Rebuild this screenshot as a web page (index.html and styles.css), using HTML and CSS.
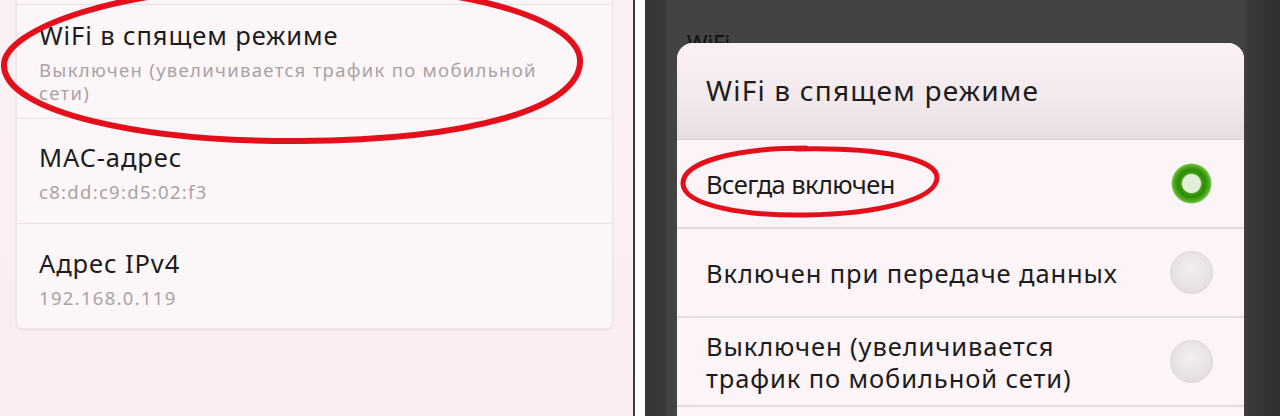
FILE: index.html
```html
<!DOCTYPE html>
<html lang="ru">
<head>
<meta charset="utf-8">
<title>WiFi в спящем режиме</title>
<link rel="stylesheet" href="styles.css">
</head>
<body>
<div class="screen">
  <section class="left">
    <div class="card">
      <div class="stub"></div>
      <div class="row row-first">
        <div class="title">WiFi в спящем режиме</div>
        <div class="sub">Выключен (увеличивается трафик по мобильной<br>сети)</div>
      </div>
      <div class="row row-mac">
        <div class="title">MAC-адрес</div>
        <div class="sub">c8:dd:c9:d5:02:f3</div>
      </div>
      <div class="row row-ip">
        <div class="title">Адрес IPv4</div>
        <div class="sub">192.168.0.119</div>
      </div>
    </div>
    <svg class="mark mark-left" width="600" height="160" viewBox="0 0 600 160">
      <path d="M300 -14 C 120 -16, 2 30, 4 66 C 6 112, 140 142, 300 141 C 470 140, 582 108, 580 60 C 578 22, 480 -12, 330 -14" fill="none" stroke="#e3101c" stroke-width="6" stroke-linecap="round"/>
    </svg>
  </section>
  <div class="split"></div>
  <section class="right">
    <div class="behind">WiFi</div>
    <div class="dialog">
      <div class="dlg-title">WiFi в спящем режиме</div>
      <div class="option">
        <span class="opt-text opt-tight">Всегда включен</span>
        <span class="radio on"></span>
      </div>
      <div class="option">
        <span class="opt-text">Включен при передаче данных</span>
        <span class="radio"></span>
      </div>
      <div class="option">
        <span class="opt-text">Выключен (увеличивается<br>трафик по мобильной сети)</span>
        <span class="radio"></span>
      </div>
      <div class="option option-rest"></div>
    </div>
    <svg class="mark mark-right" width="270" height="80" viewBox="0 0 270 80">
      <path d="M130 4 C 60 4, 6 18, 7 40 C 8 62, 70 72, 130 71 C 200 70, 260 56, 261 34 C 262 14, 200 3, 120 5" fill="none" stroke="#e3101c" stroke-width="5" stroke-linecap="round"/>
    </svg>
  </section>
</div>
</body>
</html>
```
FILE: styles.css
```css
* { box-sizing: border-box; }
html, body { margin: 0; padding: 0; }
body {
  width: 1280px;
  height: 416px;
  overflow: hidden;
  font-family: "Noto Sans", "Open Sans", sans-serif;
  background: #fbeff2;
}
.screen {
  display: flex;
  width: 1280px;
  height: 416px;
}
.left {
  position: relative;
  width: 633px;
  height: 416px;
  padding: 0 20px 0 16px;
  background: linear-gradient(180deg, #fbf1f4 0%, #fbedf0 100%);
  overflow: hidden;
}
.card {
  margin-top: -16px;
  background: #fdf6f8;
  border: 1px solid #efe3e6;
  border-radius: 6px;
  box-shadow: 0 1px 2px rgba(120, 90, 100, 0.12);
}
.stub {
  height: 20px;
  border-bottom: 1px solid #ebdfe2;
}
.row {
  padding: 23px 22px 20px;
  border-bottom: 1px solid #ebdfe2;
}
.row:last-child { border-bottom: 0; }
.row-first { padding-top: 15px; padding-bottom: 14px; }
.row-ip { padding-top: 24px; padding-bottom: 19px; }
.title {
  font-size: 25.5px;
  line-height: 30px;
  color: #1c1c1c;
  letter-spacing: 0.9px;
}
.sub {
  margin-top: 8px;
  font-size: 18.5px;
  line-height: 23px;
  color: #a9a2a5;
  letter-spacing: 1.3px;
}
.mark {
  position: absolute;
  pointer-events: none;
}
.mark-left { left: 0; top: 0; }
.split {
  width: 12px;
  height: 416px;
  background: #ffffff;
  border-left: 2px solid #3a3a3a;
}
.right {
  position: relative;
  flex: 1;
  height: 416px;
  padding-left: 32px;
  padding-right: 36px;
  background:
    linear-gradient(90deg, #363636 0px, #3a3a3a 20px, #434343 22px, #434343 calc(100% - 36px), #3b3b3b calc(100% - 34px), #2f2f2f 100%);
  overflow: hidden;
}
.behind {
  height: 43px;
  padding: 30px 0 0 10px;
  font-size: 22px;
  line-height: 24px;
  color: #111111;
}
.dialog {
  position: relative;
  z-index: 1;
  width: 567px;
  border-radius: 16px 16px 0 0;
  background: #fdf4f7;
  overflow: hidden;
}
.dlg-title {
  height: 97px;
  padding-left: 29px;
  display: flex;
  align-items: center;
  padding-bottom: 2px;
  font-size: 28px;
  color: #1c1c1c;
  letter-spacing: 1.2px;
  background: linear-gradient(180deg, #fbf1f4 0%, #f2e9ec 60%, #e6dee1 100%);
  border-bottom: 1px solid #d9d0d3;
}
.option {
  height: 89px;
  display: flex;
  align-items: center;
  justify-content: space-between;
  padding: 0 31px 0 29px;
  border-bottom: 2px solid #e6dcdf;
}
.option-rest { border-bottom: 0; }
.opt-text {
  font-size: 25.5px;
  line-height: 32px;
  color: #1c1c1c;
  letter-spacing: 0.9px;
}
.opt-tight { letter-spacing: -0.6px; }
.radio {
  width: 43px;
  height: 43px;
  border-radius: 50%;
  flex: none;
  background: radial-gradient(circle at 50% 40%, #f3eef0 0%, #e8e1e4 60%, #ddd5d8 100%);
  border: 1px solid #ddd4d7;
}
.radio.on {
  width: 41px;
  height: 41px;
  margin-right: 1px;
  background: radial-gradient(circle closest-side, #e2efd8 0 44%, #3f9d15 50%, #2c8a07 66%, #49aa1d 84%, #6cc23e 94%, rgba(140, 210, 100, 0) 100%);
  border: 0;
}
.mark-right { left: 31px; top: 144px; z-index: 2; }
```
